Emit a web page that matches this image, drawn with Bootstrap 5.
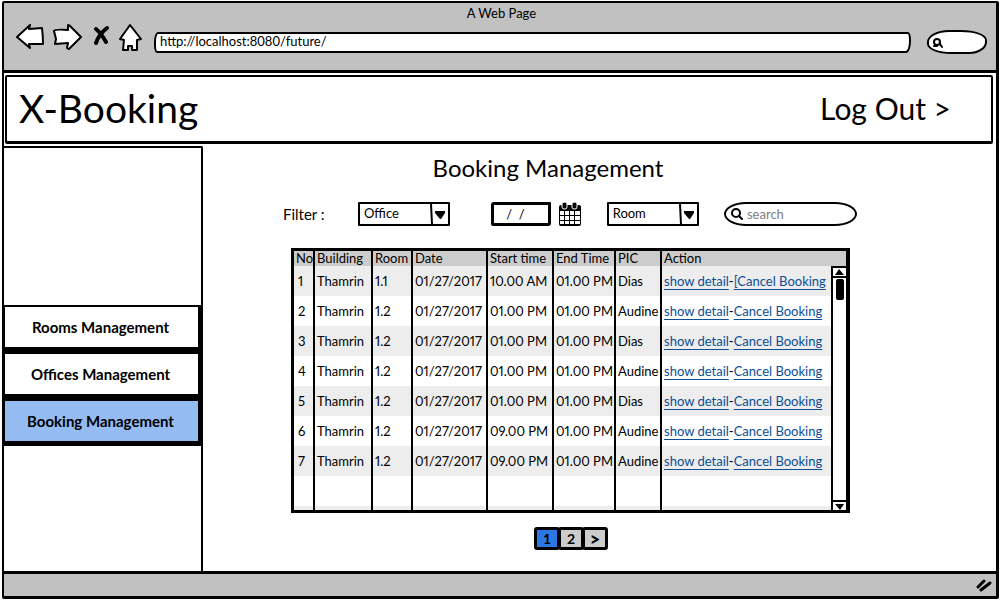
<!DOCTYPE html>
<html lang="en">
<head>
<meta charset="utf-8">
<meta name="viewport" content="width=device-width, initial-scale=1">
<title>X-Booking</title>
<link href="https://cdn.jsdelivr.net/npm/bootstrap@5.3.0/dist/css/bootstrap.min.css" rel="stylesheet">
<style>
  :root { --ink: #000; --chrome: #c1c1c1; --link: #0b4e96; }
  body { font-family: Lato, "Open Sans", sans-serif; font-size: 13px; line-height: 18px; color: var(--ink); background: #fff; }
  button, input, select { font: inherit; color: inherit; }
  .browser { border: solid var(--ink); border-width: 2px 3px 3px 2px; border-radius: 2px; margin: 1px 1px 0 2px; min-height: calc(100vh - 2px); }
  .chrome-top { background: var(--chrome); border-bottom: 3px solid var(--ink); padding: 1px 9px 16px 12px; }
  .chrome-bottom { background: var(--chrome); border-top: 3px solid var(--ink); height: 25px; }
  .tool { background: none; border: 0; padding: 0; display: block; line-height: 0; }
  .tool svg, .sketch { fill: #fff; stroke: var(--ink); stroke-width: 2; stroke-linejoin: round; stroke-linecap: round; }
  .address { border: 2px solid var(--ink); border-radius: 4px 3px 5px 3px / 10px 8px 12px 8px; height: 21px; padding: 0 4px 2px; background: #fff; min-width: 0; }
  .quick { width: 60px; height: 24px; border: 2px solid var(--ink); border-radius: 22px 26px 18px 24px / 12px 10px 12px 10px; background: #fff; padding-left: 3px; }
  .bare { border: 0; background: none; outline: 0; min-width: 0; padding: 0; }
  .masthead { border: 2px solid var(--ink); border-bottom-width: 3px; border-radius: 2px; margin: 2px 3px 2px 1px; height: 69px; padding: 0 40px 3px 12px; }
  .brand { font-size: 39px; line-height: 48px; }
  .logout { font-size: 30px; line-height: 36px; }
  .masthead a { color: inherit; text-decoration: none; }
  .side { width: 199px; border: solid var(--ink); border-width: 2px 2px 0 0; border-radius: 0 2px 0 0; padding-top: 157px; }
  .side a { display: flex; align-items: center; justify-content: center; height: 47px; border: solid var(--ink); border-width: 2px 3px 5px 1px; padding-right: 2px; font-size: 15px; font-weight: 700; color: inherit; text-decoration: none; background: #fff; }
  .side a.active { background: #94bbf2; }
  .content { padding: 6px 139px 16px 80px; }
  .page-title { font-size: 24px; line-height: 32px; padding-right: 44px; margin-bottom: 17px; }
  .filters { min-height: 26px; margin-bottom: 21px; }
  .filter-label { font-size: 15px; width: 75px; }
  .pick { appearance: none; width: 92px; height: 24px; border: 2px solid var(--ink); border-radius: 1px; padding: 0 22px 2px 4px;
    background: #fff url("data:image/svg+xml,%3Csvg xmlns='http://www.w3.org/2000/svg' width='18' height='20'%3E%3Cpath d='M1 0 2 20' stroke='%23000' stroke-width='2'/%3E%3Cpath d='M5 7 15 7 15 9 11 15 10 15 5 9Z'/%3E%3C/svg%3E") right 0 top 0 no-repeat; }
  .date-box { width: 60px; height: 24px; border: 3px solid var(--ink); border-radius: 3px 1px 3px 2px; padding: 0 0 1px 12px; background: #fff; }
  .find { width: 133px; height: 24px; border: 2px solid var(--ink); border-radius: 22px / 12px; padding-left: 5px; }
  .find input::placeholder { color: #808080; opacity: 1; }
  .grid-box { border: 3px solid var(--ink); border-right-width: 4px; margin: 0 7px 0 8px; position: relative; }
  .bookings { table-layout: fixed; width: 100%; margin: 0; font-variant-numeric: proportional-nums; }
  .bookings th, .bookings td { padding: 0 0 0 2px; white-space: nowrap; overflow: hidden; border-left: 2px solid var(--ink); font-weight: 400; }
  .bookings th:first-child, .bookings td:first-child { border-left: 0; padding-left: 4px; }
  .bookings th:first-child { padding-left: 2px; }
  .bookings th { background: #ccc; height: 15px; line-height: 15px; }
  .bookings td { height: 30px; }
  .bookings tbody tr:nth-child(odd) td { background: #ededed; }
  .bookings tbody tr.stub td { height: 4px; }
  .bookings a { color: var(--link); text-underline-offset: 3px; }
  .scroller { position: absolute; top: 15px; right: 0; bottom: 0; width: 15px; background: #fff; border: 2px solid var(--ink); border-width: 2px 0 0 2px; }
  .scroller button { border: 0; background: none; padding: 0; line-height: 0; height: 10px; }
  .scroller .up { border-bottom: 2px solid var(--ink); }
  .scroller .down { border-top: 2px solid var(--ink); }
  .thumb { width: 8px; height: 21px; background: var(--ink); border-radius: 2px; margin: 1px auto auto; }
  .pages { margin-top: 14px; }
  .pages button { width: 26px; height: 23px; margin-right: -2px; border: 3px solid var(--ink); border-radius: 3px; background: #ccc; padding: 0; font-size: 14px; line-height: 16px; font-weight: 700; }
  .pages button.current { background: #2b78e4; }
  .pages button.forward { font-size: 18px; font-weight: 900; }
</style>
</head>
<body>
<div class="browser d-flex flex-column">
  <header class="chrome-top">
    <div class="text-center">A Web Page</div>
    <div class="d-flex align-items-center">
      <nav class="d-flex align-items-center me-2 pe-1" aria-label="Browser">
        <button class="tool" aria-label="Back"><svg width="37" height="28" viewBox="0 0 37 28"><path d="M1 13 14 1 13 5 26 4Q27 12 27 20L13 20 14 24Z"/></svg></button>
        <button class="tool" aria-label="Forward"><svg width="39" height="28" viewBox="0 0 39 28"><path d="M1 7Q2 5 15 6L15 1 17 2 28 13 16 25 14 24 15 19 2 20 3 15Z"/></svg></button>
        <button class="tool" aria-label="Stop"><svg width="27" height="28" viewBox="0 0 27 28"><path d="M4 5Q9 9 14 18M15 4Q7 10 4 19" stroke-width="4" style="fill:none"/></svg></button>
        <button class="tool" aria-label="Home"><svg width="23" height="28" viewBox="0 0 23 28"><path d="M11 1 22 15 18 16 18 26 13 26 13 22 9 22 9 26 4 26 5 16 1 15Z"/></svg></button>
      </nav>
      <input class="address flex-grow-1 mt-2" type="text" value="http://localhost:8080/future/" aria-label="Address">
      <label class="quick d-flex align-items-center ms-3 mt-2">
        <svg class="sketch flex-shrink-0" width="12" height="14" viewBox="0 0 12 14"><circle cx="5" cy="7" r="3"/><path d="M2 11 5 11M8 9 10 12"/></svg>
        <input class="bare w-100" type="text" aria-label="Web search">
      </label>
    </div>
  </header>

  <div class="masthead d-flex align-items-center justify-content-between">
    <a class="brand" href="#">X-Booking</a>
    <a class="logout" href="#">Log Out &gt;</a>
  </div>

  <div class="d-flex flex-grow-1">
    <nav class="side flex-shrink-0" aria-label="Sections">
      <a href="#">Rooms Management</a>
      <a href="#">Offices Management</a>
      <a class="active" href="#">Booking Management</a>
    </nav>
    <main class="content flex-grow-1">
      <h1 class="page-title text-center fw-normal">Booking Management</h1>
      <form class="filters d-flex align-items-center justify-content-between">
        <div class="d-flex align-items-center">
          <label class="filter-label" for="office">Filter :</label>
          <select class="pick" id="office"><option>Office</option></select>
        </div>
        <div class="d-flex align-items-center gap-2 ms-3">
          <input class="date-box" type="text" value="/  /" aria-label="Date">
          <button class="tool" type="button" aria-label="Open calendar">
            <svg width="22" height="24" viewBox="0 0 22 24" style="stroke:none"><rect x="0" y="3" width="22" height="21" rx="2" fill="#000"/><path d="M1 9h4v4H1zM6 9h4v4H6zM11 9h4v4h-4zM16 9h5v4h-5zM1 14h4v4H1zM6 14h4v4H6zM11 14h4v4h-4zM16 14h5v4h-5zM1 19h4v3H1zM6 19h4v3H6zM11 19h4v3h-4zM16 19h5v3h-5z"/><rect x="3" y="0" width="5" height="7" rx="2" fill="#000" stroke="#fff" stroke-width="1"/><rect x="13" y="0" width="5" height="7" rx="2" fill="#000" stroke="#fff" stroke-width="1"/></svg>
          </button>
        </div>
        <select class="pick" aria-label="Room"><option>Room</option></select>
        <label class="find d-flex align-items-center">
          <svg class="sketch flex-shrink-0 me-1" width="12" height="14" viewBox="0 0 12 14"><circle cx="5" cy="6" r="4"/><path d="M8 9 11 12"/></svg>
          <input class="bare w-100" type="search" placeholder="search" aria-label="Search">
        </label>
      </form>

      <div class="grid-box">
        <table class="bookings">
          <colgroup><col style="width:20px"><col style="width:58px"><col style="width:40px"><col style="width:75px"><col style="width:66px"><col style="width:62px"><col style="width:46px"><col></colgroup>
          <thead><tr><th>No</th><th>Building</th><th>Room</th><th>Date</th><th>Start time</th><th>End Time</th><th>PIC</th><th>Action</th></tr></thead>
          <tbody>
            <tr><td>1</td><td>Thamrin</td><td>1.1</td><td>01/27/2017</td><td>10.00 AM</td><td>01.00 PM</td><td>Dias</td><td><a href="#">show detail</a>-<a href="#">[Cancel Booking</a></td></tr>
            <tr><td>2</td><td>Thamrin</td><td>1.2</td><td>01/27/2017</td><td>01.00 PM</td><td>01.00 PM</td><td>Audine</td><td><a href="#">show detail</a>-<a href="#">Cancel Booking</a></td></tr>
            <tr><td>3</td><td>Thamrin</td><td>1.2</td><td>01/27/2017</td><td>01.00 PM</td><td>01.00 PM</td><td>Dias</td><td><a href="#">show detail</a>-<a href="#">Cancel Booking</a></td></tr>
            <tr><td>4</td><td>Thamrin</td><td>1.2</td><td>01/27/2017</td><td>01.00 PM</td><td>01.00 PM</td><td>Audine</td><td><a href="#">show detail</a>-<a href="#">Cancel Booking</a></td></tr>
            <tr><td>5</td><td>Thamrin</td><td>1.2</td><td>01/27/2017</td><td>01.00 PM</td><td>01.00 PM</td><td>Dias</td><td><a href="#">show detail</a>-<a href="#">Cancel Booking</a></td></tr>
            <tr><td>6</td><td>Thamrin</td><td>1.2</td><td>01/27/2017</td><td>09.00 PM</td><td>01.00 PM</td><td>Audine</td><td><a href="#">show detail</a>-<a href="#">Cancel Booking</a></td></tr>
            <tr><td>7</td><td>Thamrin</td><td>1.2</td><td>01/27/2017</td><td>09.00 PM</td><td>01.00 PM</td><td>Audine</td><td><a href="#">show detail</a>-<a href="#">Cancel Booking</a></td></tr>
            <tr><td></td><td></td><td></td><td></td><td></td><td></td><td></td><td></td></tr>
            <tr class="stub"><td></td><td></td><td></td><td></td><td></td><td></td><td></td><td></td></tr>
          </tbody>
        </table>
        <div class="scroller d-flex flex-column">
          <button class="up" type="button" aria-label="Scroll up"><svg width="9" height="7" viewBox="0 0 9 7"><path d="M4 0 9 6 0 6Z"/></svg></button>
          <div class="thumb"></div>
          <button class="down" type="button" aria-label="Scroll down"><svg width="9" height="7" viewBox="0 0 9 7"><path d="M0 1 9 1 5 7Z"/></svg></button>
        </div>
      </div>

      <nav class="pages d-flex justify-content-center" aria-label="Pages">
        <button class="current" type="button">1</button>
        <button type="button">2</button>
        <button class="forward" type="button">&gt;</button>
      </nav>
    </main>
  </div>

  <footer class="chrome-bottom d-flex justify-content-end align-items-center pe-1">
    <svg width="16" height="14" viewBox="0 0 16 14" stroke="#000" stroke-width="3" stroke-linecap="round"><path d="M2 9 8 3M5 12 14 5"/></svg>
  </footer>
</div>
<script src="https://cdn.jsdelivr.net/npm/bootstrap@5.3.0/dist/js/bootstrap.bundle.min.js"></script>
</body>
</html>
